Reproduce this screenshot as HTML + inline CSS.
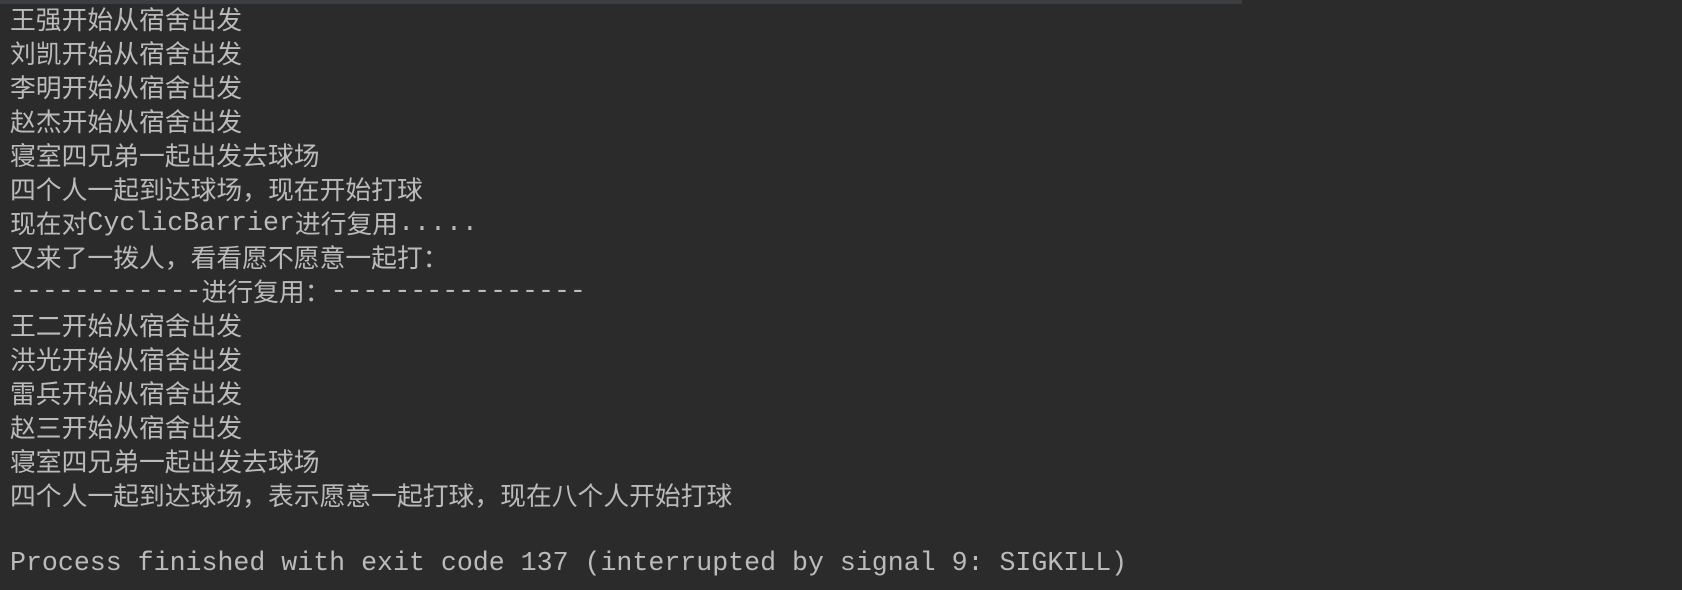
<!DOCTYPE html>
<html><head><meta charset="utf-8"><style>
html,body{margin:0;padding:0;background:#2b2b2b;width:1682px;height:590px;overflow:hidden}
.bar{position:absolute;left:0;top:0;width:1242px;height:4px;background:#3c3f41}
.out{position:absolute;left:10px;top:2px;color:#bbbbbb;font-family:"Liberation Mono",monospace;font-size:26.6px}
.out div{height:34px;line-height:34px;white-space:pre}
.c{font-family:"Noto Sans CJK SC",sans-serif;font-size:25.8px;line-height:34px;vertical-align:top}
</style></head><body>
<div class="bar"></div>
<div class="out"><div><span class="c">王强开始从宿舍出发</span></div><div><span class="c">刘凯开始从宿舍出发</span></div><div><span class="c">李明开始从宿舍出发</span></div><div><span class="c">赵杰开始从宿舍出发</span></div><div><span class="c">寝室四兄弟一起出发去球场</span></div><div><span class="c">四个人一起到达球场，现在开始打球</span></div><div><span class="c">现在对</span>CyclicBarrier<span class="c">进行复用</span>.....</div><div><span class="c">又来了一拨人，看看愿不愿意一起打：</span></div><div>------------<span class="c">进行复用：</span>----------------</div><div><span class="c">王二开始从宿舍出发</span></div><div><span class="c">洪光开始从宿舍出发</span></div><div><span class="c">雷兵开始从宿舍出发</span></div><div><span class="c">赵三开始从宿舍出发</span></div><div><span class="c">寝室四兄弟一起出发去球场</span></div><div><span class="c">四个人一起到达球场，表示愿意一起打球，现在八个人开始打球</span></div><div> </div><div>Process finished with exit code 137 (interrupted by signal 9: SIGKILL)</div></div>
</body></html>
